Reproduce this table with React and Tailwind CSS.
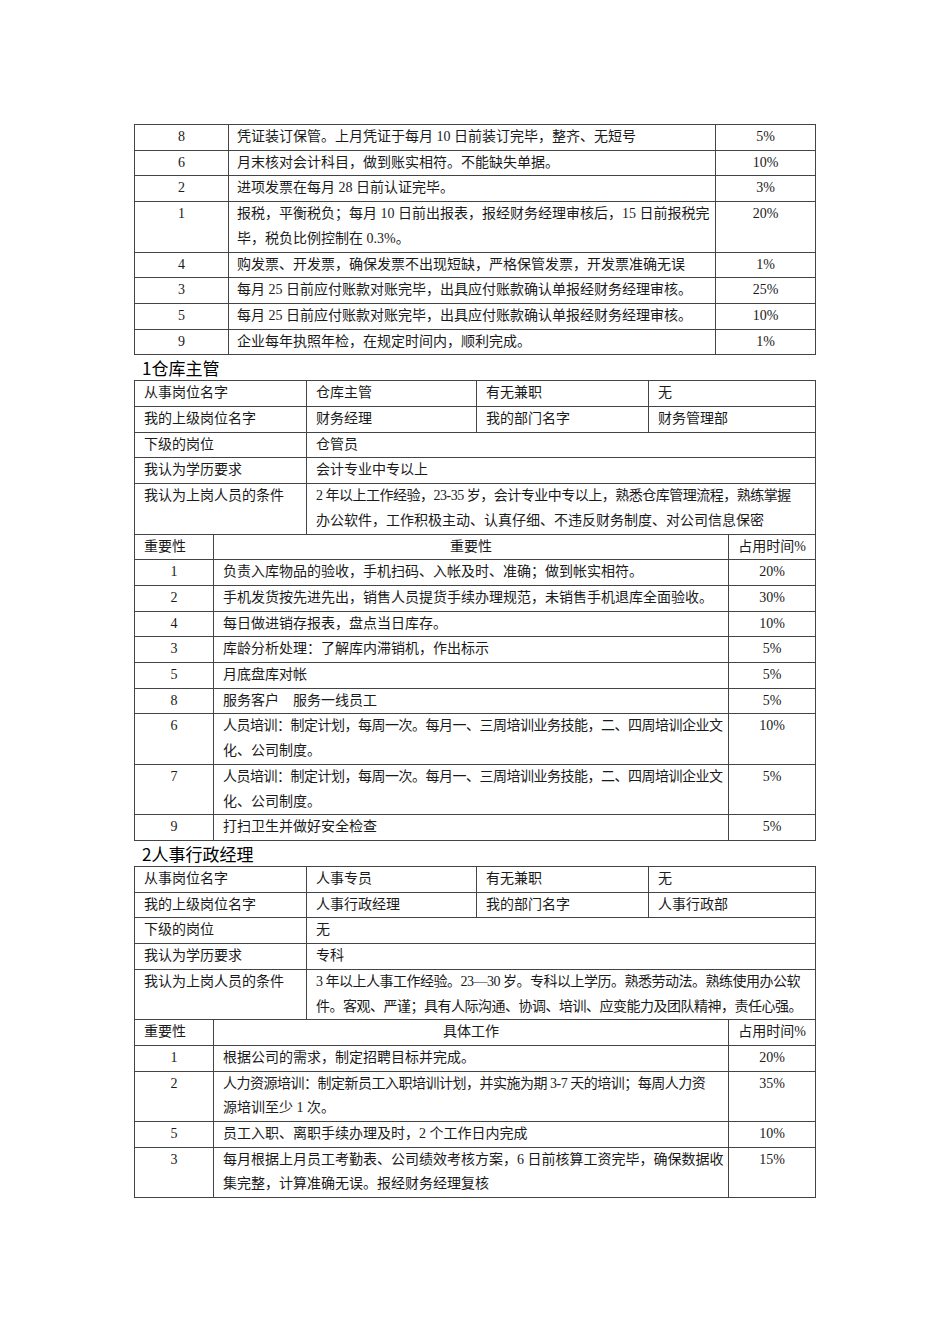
import React from 'react';

const serif = { fontFamily: '"Liberation Serif", "Noto Sans CJK SC", serif' };

// 第一张表（接上页）
const duties0 = [
  ['8', ['凭证装订保管。上月凭证于每月 10 日前装订完毕，整齐、无短号'], '5%'],
  ['6', ['月末核对会计科目，做到账实相符。不能缺失单据。'], '10%'],
  ['2', ['进项发票在每月 28 日前认证完毕。'], '3%'],
  ['1', ['报税，平衡税负；每月 10 日前出报表，报经财务经理审核后，15 日前报税完', '毕，税负比例控制在 0.3%。'], '20%'],
  ['4', ['购发票、开发票，确保发票不出现短缺，严格保管发票，开发票准确无误'], '1%'],
  ['3', ['每月 25 日前应付账款对账完毕，出具应付账款确认单报经财务经理审核。'], '25%'],
  ['5', ['每月 25 日前应付账款对账完毕，出具应付账款确认单报经财务经理审核。'], '10%'],
  ['9', ['企业每年执照年检，在规定时间内，顺利完成。'], '1%'],
];

const postes = [
  {
    titre: '1仓库主管',
    nom: '仓库主管',
    superieur: '财务经理',
    dept: '财务管理部',
    subordonne: '仓管员',
    diplome: '会计专业中专以上',
    conditions: [
      ['2 年以上工作经验，23-35 岁，会计专业中专以上，熟悉仓库管理流程，熟练掌握', true],
      ['办公软件，工作积极主动、认真仔细、不违反财务制度、对公司信息保密', false],
    ],
    entete: '重要性',
    taches: [
      ['1', [['负责入库物品的验收，手机扫码、入帐及时、准确；做到帐实相符。']], '20%'],
      ['2', [['手机发货按先进先出，销售人员提货手续办理规范，未销售手机退库全面验收。']], '30%'],
      ['4', [['每日做进销存报表，盘点当日库存。']], '10%'],
      ['3', [['库龄分析处理：了解库内滞销机，作出标示']], '5%'],
      ['5', [['月底盘库对帐']], '5%'],
      ['8', [['服务客户　服务一线员工']], '5%'],
      ['6', [['人员培训：制定计划，每周一次。每月一、三周培训业务技能，二、四周培训企业文', true], ['化、公司制度。']], '10%'],
      ['7', [['人员培训：制定计划，每周一次。每月一、三周培训业务技能，二、四周培训企业文', true], ['化、公司制度。']], '5%'],
      ['9', [['打扫卫生并做好安全检查']], '5%'],
    ],
  },
  {
    titre: '2人事行政经理',
    nom: '人事专员',
    superieur: '人事行政经理',
    dept: '人事行政部',
    subordonne: '无',
    diplome: '专科',
    conditions: [
      ['3 年以上人事工作经验。23—30 岁。专科以上学历。熟悉劳动法。熟练使用办公软', true],
      ['件。客观、严谨；具有人际沟通、协调、培训、应变能力及团队精神，责任心强。', true],
    ],
    entete: '具体工作',
    taches: [
      ['1', [['根据公司的需求，制定招聘目标并完成。']], '20%'],
      ['2', [['人力资源培训：制定新员工入职培训计划，并实施为期 3-7 天的培训；每周人力资', true], ['源培训至少 1 次。']], '35%'],
      ['5', [['员工入职、离职手续办理及时，2 个工作日内完成']], '10%'],
      ['3', [['每月根据上月员工考勤表、公司绩效考核方案，6 日前核算工资完毕，确保数据收'], ['集完整，计算准确无误。报经财务经理复核']], '15%'],
    ],
  },
];

function Ligne({ texte, serre }) {
  return (
    <div className={serre ? 'whitespace-nowrap tracking-[-0.5px]' : 'whitespace-nowrap'}>{texte}</div>
  );
}

function Cellule({ children, className = '' }) {
  return (
    <div className={`border-r border-b border-[#444] overflow-hidden leading-[24.7px] ${className}`}>
      {children}
    </div>
  );
}

function FicheInfo({ p }) {
  return (
    <div className="border-t border-l border-[#444]">
      <div className="grid grid-cols-[172px_170px_172px_167px]">
        <Cellule className="pl-[9px]">从事岗位名字</Cellule>
        <Cellule className="pl-[9px]">{p.nom}</Cellule>
        <Cellule className="pl-[9px]">有无兼职</Cellule>
        <Cellule className="pl-[9px]">无</Cellule>
      </div>
      <div className="grid grid-cols-[172px_170px_172px_167px]">
        <Cellule className="pl-[9px]">我的上级岗位名字</Cellule>
        <Cellule className="pl-[9px]">{p.superieur}</Cellule>
        <Cellule className="pl-[9px]">我的部门名字</Cellule>
        <Cellule className="pl-[9px]">{p.dept}</Cellule>
      </div>
      <div className="grid grid-cols-[172px_509px]">
        <Cellule className="pl-[9px]">下级的岗位</Cellule>
        <Cellule className="pl-[9px]">{p.subordonne}</Cellule>
      </div>
      <div className="grid grid-cols-[172px_509px]">
        <Cellule className="pl-[9px]">我认为学历要求</Cellule>
        <Cellule className="pl-[9px]">{p.diplome}</Cellule>
      </div>
      <div className="grid grid-cols-[172px_509px]">
        <Cellule className="pl-[9px]">我认为上岗人员的条件</Cellule>
        <Cellule className="pl-[9px]">
          {p.conditions.map(([t, s], i) => (
            <Ligne key={i} texte={t} serre={s} />
          ))}
        </Cellule>
      </div>
    </div>
  );
}

function Taches({ p }) {
  return (
    <div className="border-l border-[#444]">
      <div className="grid grid-cols-[79px_515px_87px]">
        <Cellule className="pl-[9px]">重要性</Cellule>
        <Cellule className="text-center">{p.entete}</Cellule>
        <Cellule className="text-center">占用时间%</Cellule>
      </div>
      {p.taches.map(([n, lignes, pct], i) => (
        <div key={i} className="grid grid-cols-[79px_515px_87px]">
          <Cellule className="text-center">{n}</Cellule>
          <Cellule className="pl-[9px]">
            {lignes.map(([t, s], j) => (
              <Ligne key={j} texte={t} serre={s} />
            ))}
          </Cellule>
          <Cellule className="text-center">{pct}</Cellule>
        </div>
      ))}
    </div>
  );
}

export default function App() {
  return (
    <div className="min-h-[1344px] w-[950px] bg-white text-[14px] text-[#1a1a1a]" style={serif}>
      <div className="pt-[124px] pl-[134px]">
        <div className="w-[682px]">
          <div className="border-t border-l border-[#444]">
            {duties0.map(([n, lignes, pct], i) => (
              <div key={i} className="grid grid-cols-[94px_487px_100px]">
                <Cellule className="text-center">{n}</Cellule>
                <Cellule className="pl-[8px]">
                  {lignes.map((t, j) => (
                    <Ligne key={j} texte={t} />
                  ))}
                </Cellule>
                <Cellule className="text-center">{pct}</Cellule>
              </div>
            ))}
          </div>

          {postes.map((p) => (
            <div key={p.titre}>
              <div className="h-[25px] pl-[8px] text-[17px] leading-[25px] text-black font-['Noto_Sans_CJK_SC',sans-serif]">
                {p.titre}
              </div>
              <FicheInfo p={p} />
              <Taches p={p} />
            </div>
          ))}
        </div>
      </div>
    </div>
  );
}
